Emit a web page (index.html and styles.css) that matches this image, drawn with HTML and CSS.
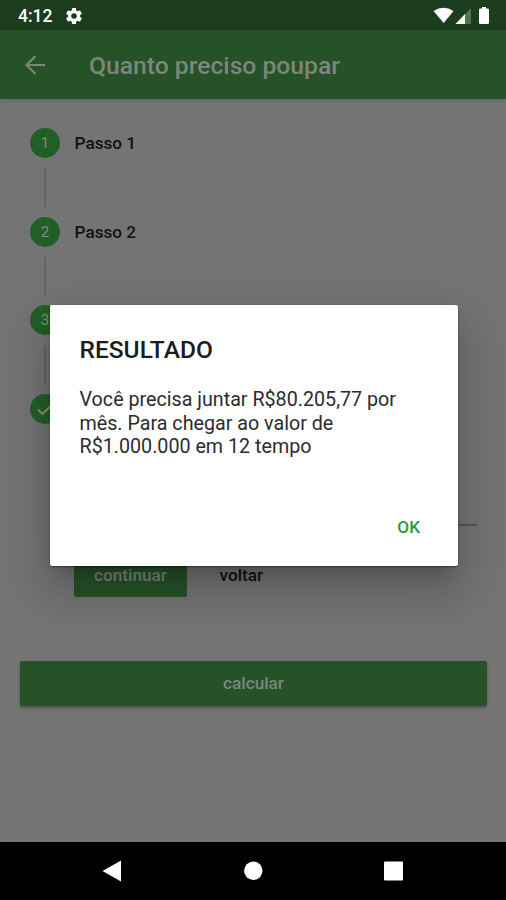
FILE: index.html
```html
<!DOCTYPE html>
<html lang="pt-BR">
<head>
<meta charset="utf-8">
<title>Quanto preciso poupar</title>
<link rel="stylesheet" href="styles.css">
</head>
<body>
<div class="screen">
  <div class="status">
    <span class="time">4:12</span>
    <svg class="gear" viewBox="2 2 20 20"><path fill="#fff" fill-rule="evenodd" d="M19.4 13a7.800 7.800 0 0 0 0-2l2.100-1.650a.5.5 0 0 0 .12-.64l-2-3.460a.5.5 0 0 0-.61-.22l-2.490 1a7.300 7.300 0 0 0-1.690-.98l-.38-2.650A.5.5 0 0 0 14 2h-4a.5.5 0 0 0-.49.42l-.38 2.650c-.61.25-1.170.59-1.690.98l-2.490-1a.5.5 0 0 0-.61.22l-2 3.460a.5.5 0 0 0 .12.64L4.570 11a8 8 0 0 0 0 2l-2.110 1.650a.5.5 0 0 0-.12.64l2 3.460c.12.22.39.3.61.22l2.490-1c.52.4 1.080.73 1.690.98l.38 2.650c.03.24.24.4.49.4h4c.25 0 .46-.18.49-.42l.38-2.650a7.300 7.300 0 0 0 1.690-.98l2.490 1c.23.09.49 0 .61-.22l2-3.460a.5.5 0 0 0-.12-.64zM12 15.500a3.500 3.500 0 1 1 0-7 3.500 3.500 0 0 1 0 7z"/></svg>
    <svg class="signals" viewBox="0 0 60 20">
      <path fill="#fff" d="M-.5 5Q9.500 -1.500 19.500 5L9.700 17z"/>
      <path fill="#4f7551" d="M37 2V18H21.500z"/>
      <path fill="#fff" d="M31 8V18H21.500z"/>
      <path fill="#fff" d="M48 1h4v1.500h1.700q1.300 0 1.300 1.300v12.900q0 1.300-1.300 1.300h-7.400q-1.300 0-1.300-1.300v-12.900q0-1.300 1.300-1.300h1.700z"/>
    </svg>
  </div>
  <header class="appbar">
    <svg class="back" viewBox="0 0 20 20" fill="none" stroke="#7c867c" stroke-width="2.200"><path d="M20 10H2M10.500 1L1.500 10l9 9"/></svg>
    <h1>Quanto preciso poupar</h1>
  </header>
  <main class="content">
    <ol class="stepper">
      <li><span class="dot">1</span><span class="label">Passo 1</span></li>
      <li><span class="dot">2</span><span class="label">Passo 2</span></li>
      <li><span class="dot">3</span></li>
      <li><span class="dot"><svg viewBox="0 0 20 20" fill="none" stroke="#7d917d" stroke-width="2"><path d="M3 10.500l4.500 4.500L17 5.500"/></svg></span></li>
    </ol>
    <div class="field"></div>
    <div class="actions"><span class="btn continue">continuar</span><span class="cancel">voltar</span></div>
    <div class="btn calculate">calcular</div>
  </main>
  <nav class="navbar">
    <svg viewBox="0 0 22 22"><path fill="#fff" d="M.5 11L19 .5v21z"/></svg>
    <svg viewBox="0 0 22 22"><circle fill="#fff" cx="11.300" cy="10.800" r="9.200"/></svg>
    <svg viewBox="0 0 22 22"><rect fill="#fff" x="1" y="1.500" width="19" height="19" rx="1"/></svg>
  </nav>
  <section class="dialog">
    <h2>RESULTADO</h2>
    <p>Você precisa juntar R$80.205,77 por<br>mês. Para chegar ao valor de<br>R$1.000.000 em 12 tempo</p>
    <div class="ok">OK</div>
  </section>
</div>
</body>
</html>
```
FILE: styles.css
```css
* { box-sizing: border-box; }
body { margin: 0; font-family: Roboto, "Liberation Sans", sans-serif; }
h1, h2, p, ol { margin: 0; padding: 0; }
.screen { position: relative; width: 506px; height: 900px; background: #747474; overflow: hidden; display: flex; flex-direction: column; }
.status { height: 30px; flex: none; background: #1c3d1d; display: flex; align-items: center; padding: 2px 12px 0 18px; }
.time { color: #fff; font-size: 17.500px; font-weight: 500; line-height: 28px; width: 48px; }
.gear { width: 16px; height: 16px; }
.signals { width: 60px; height: 20px; margin-left: auto; overflow: visible; }
.appbar { position: relative; height: 69px; flex: none; background: #265228; box-shadow: 0 1px 3px rgba(0,0,0,.15); display: flex; align-items: center; padding-left: 25px; }
.back { width: 20px; height: 20px; margin-right: 44px; }
h1 { font-size: 24.700px; font-weight: 500; color: #7c867c; line-height: 34px; padding-top: 2px; white-space: nowrap; }
.content { flex: 1; padding: 29px 19px 0 20px; }
.stepper { list-style: none; padding-left: 10px; }
.stepper li { height: 88.500px; display: grid; grid-template-columns: 30px 1fr; grid-template-rows: 30px 1fr; column-gap: 14.500px; align-items: center; }
.stepper li:last-child { height: 30px; }
.stepper li:not(:last-child)::after { content: ""; grid-row: 2; grid-column: 1; align-self: start; justify-self: center; width: 1.500px; height: 39px; margin-top: 10px; background: #636363; }
.dot { width: 30px; height: 30px; border-radius: 50%; background: #225f27; color: #7d917d; font-size: 15px; line-height: 30px; display: flex; align-items: center; justify-content: center; }
.dot svg { width: 20px; height: 20px; }
.label { font-size: 17.200px; font-weight: 500; color: #111; }
.field { height: 102px; margin: 0 10px 0 54px; border-bottom: 2px solid #555; }
.actions { display: flex; align-items: center; margin: 28px 0 0 54px; }
.btn { background: #265228; color: #7c867c; font-size: 17.200px; font-weight: 500; text-align: center; border-radius: 2px; }
.continue { width: 113px; height: 43px; line-height: 43px; }
.cancel { margin-left: 32.500px; font-size: 17.200px; font-weight: 500; color: #111; }
.calculate { height: 45px; line-height: 45px; margin-top: 64px; box-shadow: 0 2px 3px rgba(0,0,0,.3); }
.navbar { height: 58px; flex: none; background: #000; display: flex; justify-content: center; gap: 118.500px; align-items: center; }
.navbar svg { width: 22px; height: 22px; }
.dialog { position: absolute; left: 50px; top: 305px; width: 408px; height: 261px; background: #fff; border-radius: 2px; padding: 29px 30px 0; box-shadow: 0 13px 18px -8px rgba(0,0,0,.2), 0 28px 45px 4px rgba(0,0,0,.14), 0 10px 50px 8px rgba(0,0,0,.08), 0 1px 2px rgba(0,0,0,.4); }
h2 { margin-left: -.5px; font-size: 24.500px; font-weight: 500; line-height: 32px; color: #1c1c1c; }
p { margin: 22px 0 0 -.5px; font-size: 19.700px; line-height: 23.700px; color: #2c2c2c; white-space: nowrap; }
.ok { margin-top: 56px; padding-right: 8px; text-align: right; font-size: 17.200px; font-weight: 500; line-height: 24px; color: #1f9f2c; }
```
